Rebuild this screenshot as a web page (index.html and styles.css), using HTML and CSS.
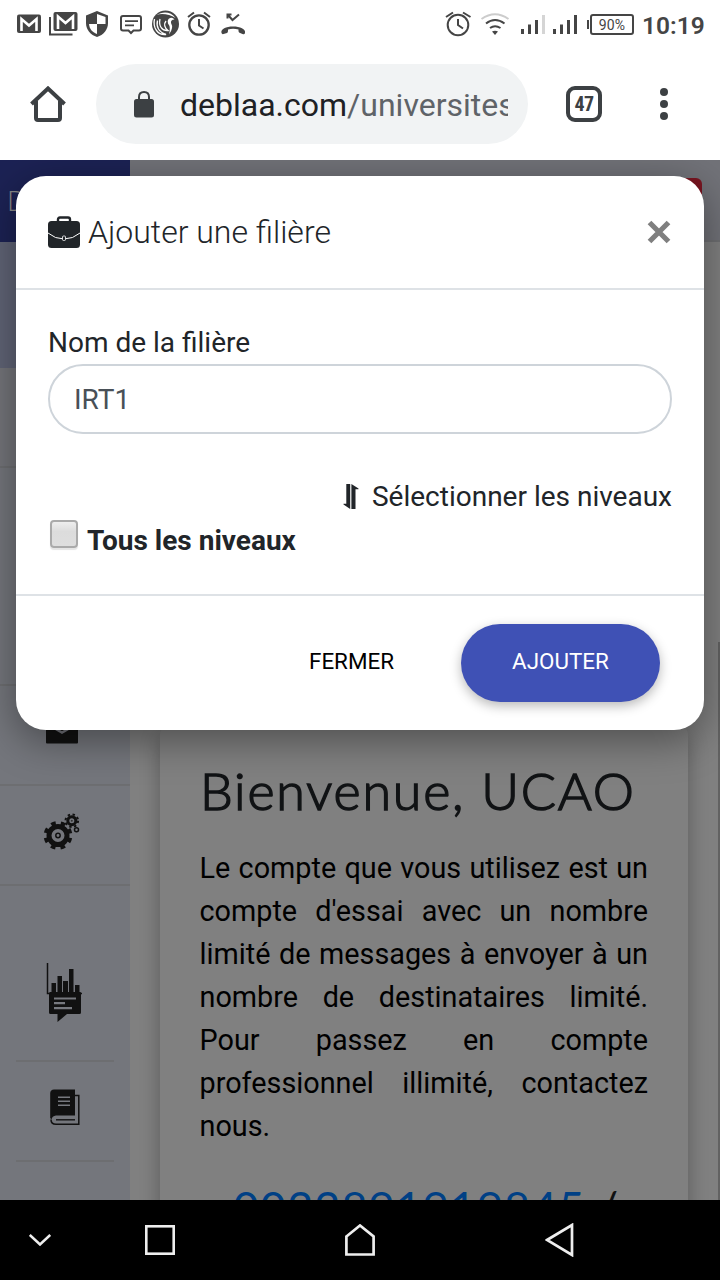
FILE: index.html
```html
<!DOCTYPE html>
<html lang="fr">
<head>
<meta charset="utf-8">
<title>Ajouter une filière</title>
<link rel="stylesheet" href="styles.css">
</head>
<body>
<div class="phone">
  <header class="status">
    <div class="status-icons">
      <svg width="30" height="48" viewBox="15 0 30 48"><rect x="17" y="14.500" width="24" height="18.500" rx="2" fill="#454545"/><path d="M21.500 31V19L29 25.500L36.500 19V31" fill="none" stroke="#fff" stroke-width="2.600"/></svg>
      <svg width="38" height="48" viewBox="45 0 38 48"><rect x="53.500" y="12" width="24" height="19" rx="2" fill="#454545"/><path d="M58 29V16.500L65.500 23L73 16.500V29" fill="none" stroke="#fff" stroke-width="2.600"/><path d="M50 17V34.500H72.500" fill="none" stroke="#454545" stroke-width="2"/></svg>
      <svg width="33" height="48" viewBox="83 0 33 48"><path d="M97 11L108 15.500V23C108 29.500 103.500 35 97 37C90.500 35 86 29.500 86 23V15.500Z" fill="#454545"/><path d="M97 14L105.500 17V24H97Z" fill="#fff"/><path d="M89 24H97V34C92 32 89.500 29 89 24Z" fill="#fff"/></svg>
      <svg width="32" height="48" viewBox="116 0 32 48"><path d="M123 16H139Q141 16 141 18V28.500Q141 30.500 139 30.500H133.500L131 33L128.500 30.500H123Q121 30.500 121 28.500V18Q121 16 123 16Z" fill="none" stroke="#454545" stroke-width="2"/><path d="M125 21.200H138M125 25.400H134" stroke="#454545" stroke-width="1.800"/></svg>
      <svg width="35" height="48" viewBox="148 0 35 48"><circle cx="165.500" cy="24" r="13.500" fill="#454545"/><path d="M156.500 15C163 11 171 11.500 175.500 18C170 14.500 162 13 156.500 15Z" fill="#fff"/><path d="M154.500 19C152.500 28 158 35.500 166 34.500C159 32 156 27 157.500 20.500M160 19C158.500 26 162 31 168 30.500C164.500 28 163.500 24 166 21" fill="none" stroke="#fff" stroke-width="1.300"/><path d="M168.500 19Q172 16.500 174.500 19.500Q170.500 19.500 171 23Q174 28 169 34.500Q171 27 168 23.500Q167 21 168.500 19Z" fill="#fff"/></svg>
      <svg width="33" height="48" viewBox="183 0 33 48"><circle cx="199" cy="25" r="9.700" fill="none" stroke="#454545" stroke-width="2.300"/><path d="M199 19V25.500L203.500 28.500M188 17L194 12.500M204 12.500L210 17" fill="none" stroke="#454545" stroke-width="2"/></svg>
      <svg width="34" height="48" viewBox="216 0 34 48"><path d="M221.500 33C220.500 29 226 26.500 233 26.500S246 29 245 33Q244.500 35 242.500 34L239.500 32.800Q238.500 32.300 238.500 31V29.500Q233 28 228 29.500V31Q228 32.500 227 32.900L223.500 34Q222 34.500 221.500 33Z" fill="#454545"/><path d="M227.500 18.500V14.500H231.500M228 15L232.500 20L239 14.500" fill="none" stroke="#454545" stroke-width="2"/></svg>
    </div>
    <div class="status-icons">
      <svg width="34" height="48" viewBox="442 0 34 48"><circle cx="458" cy="25" r="10.300" fill="none" stroke="#454545" stroke-width="2"/><path d="M458 19V25L463 28.500M446 17L453 12.500M463 12.500L470.500 17" fill="none" stroke="#454545" stroke-width="2"/></svg>
      <svg width="39" height="48" viewBox="476 0 39 48"><path d="M481.500 19Q495 9.500 508.500 19" fill="none" stroke="#ccc" stroke-width="2"/><path d="M486 23.500Q495 16.500 504.500 23.500M490 28Q495 24.500 500.500 28" fill="none" stroke="#454545" stroke-width="2"/><path d="M492 31.500Q495 30 498 31.500L495 35Z" fill="#454545"/></svg>
      <svg width="70" height="48" viewBox="515 0 70 48"><path d="M522.500 29V34M529.500 24.500V34M536.500 20V34M554.500 29V34M561.500 24.500V34M568.500 20V34M575.500 15V34" stroke="#454545" stroke-width="3"/><path d="M543.500 15V34" stroke="#d5d5d5" stroke-width="3"/></svg>
      <div class="battery">90%</div>
      <div class="clock">10:19</div>
    </div>
  </header>

  <nav class="toolbar">
    <svg class="home" width="36" height="36" viewBox="0 0 36 36"><path d="M1.500 18L18 2.500L34.500 18M6 15V32Q6 34 8 34H28Q30 34 30 32V15" fill="none" stroke="#3c4043" stroke-width="4"/></svg>
    <div class="omnibox">
      <svg width="20" height="27" viewBox="0 0 20 27"><rect x="0" y="8" width="20" height="18.500" rx="2.500" fill="#3c4043"/><path d="M5 9V6Q5 1 10 1T15 6V9" fill="none" stroke="#3c4043" stroke-width="2"/></svg>
      <div class="url">deblaa.com<span class="path">/universites</span></div>
    </div>
    <div class="tabs">47</div>
    <svg class="more" width="8" height="32" viewBox="0 0 8 32"><g fill="#3c4043"><circle cx="4" cy="4" r="4"/><circle cx="4" cy="16" r="4"/><circle cx="4" cy="28" r="4"/></g></svg>
  </nav>

  <main class="page">
    <aside class="sidebar">
      <div class="brand">D</div>
      <div class="item active"></div>
      <div class="item first"></div>
      <div class="item tall"></div>
      <div class="item mail"><svg width="36" height="26" viewBox="0 0 36 26"><rect x="2" y="0" width="32" height="25.500" rx="1" fill="#111"/><path d="M4 6.500L18 14.500L32 6.500" fill="none" stroke="#707178" stroke-width="2.500"/></svg></div>
      <div class="item gears"><svg width="38" height="38" viewBox="43 813 38 38">
        <circle cx="58" cy="835.500" r="9" fill="none" stroke="#111" stroke-width="5"/>
        <circle cx="58" cy="835.500" r="12.600" fill="none" stroke="#111" stroke-width="3.600" stroke-dasharray="4.700 5.196" stroke-dashoffset="-2.500"/>
        <circle cx="58" cy="835.500" r="2.200" fill="none" stroke="#111" stroke-width="1.500"/>
        <circle cx="71.800" cy="820.700" r="4" fill="none" stroke="#111" stroke-width="3"/><circle cx="71.800" cy="820.700" r="6.300" fill="none" stroke="#111" stroke-width="2" stroke-dasharray="2.400 2.548"/><circle cx="71.800" cy="820.700" r="1" fill="#333"/>
        <circle cx="76.500" cy="829.700" r="2" fill="none" stroke="#111" stroke-width="1.500"/></svg></div>
      <div class="item report"><svg width="38" height="62" viewBox="45 962 38 62"><path d="M47.500 963V993.500H82" fill="none" stroke="#111" stroke-width="1.500"/><path d="M51.500 983H56V993H51.500ZM57.500 976H62V993H57.500ZM63 981H68V993H63ZM69 969H73.500V993H69ZM75 985H79.500V993H75Z" fill="#111"/><path d="M50 992H80Q81 992 81 993V1012.500Q81 1014 79.500 1014H67L57.500 1022V1014H50.500Q49 1014 49 1012.500V993Z" fill="#111"/><path d="M54 998.500H76M54 1003.200H65M54 1008.200H72" stroke="#77797f" stroke-width="2.200"/></svg></div>
      <div class="item inset"><svg width="30" height="37" viewBox="50 1089 30 37"><path d="M54 1089.500H75V1115.500H56Q52 1116 51.500 1119.500L50.200 1118V1093Q50.500 1089.500 54 1089.500Z" fill="#111"/><path d="M75 1095.500H78.800V1124.300H56Q51 1124.300 51 1119.500" fill="none" stroke="#111" stroke-width="1.500"/><path d="M56 1119.800H75" stroke="#111" stroke-width="1.400"/><path d="M58 1097.200H70M58 1101.200H70M58 1105.200H70" stroke="#77797f" stroke-width="1.500"/></svg></div>
    </aside>
    <div class="content">
      <div class="topbar"></div>
      <section class="card">
        <h1>Bienvenue, UCAO</h1>
        <p>Le compte que vous utilisez est un compte d'essai avec un nombre limité de messages à envoyer à un nombre de destinataires limité. Pour passez en compte professionnel illimité, contactez nous.</p>
        <div class="contact"><a>0022891919845</a> /</div>
      </section>
    </div>
    <div class="badge"></div>
    <div class="scrollbar"></div>

    <div class="modal">
      <div class="modal-header">
        <svg width="32" height="32" viewBox="0 0 32 32"><path d="M10 6V3.500Q10 1.500 12 1.500H20Q22 1.500 22 3.500V6" fill="none" stroke="#212529" stroke-width="2.400"/><rect x="0" y="5" width="32" height="27" rx="3.500" fill="#212529"/><path d="M0 17Q7 23 16 23T32 17" fill="none" stroke="#fff" stroke-width="1"/><rect x="14.500" y="20" width="3" height="4.500" rx="1" fill="#212529" stroke="#fff" stroke-width=".8"/></svg>
        <div class="title">Ajouter une filière</div>
        <svg width="24" height="24" viewBox="0 0 24 24"><path d="M2.500 2.500L21.500 21.500M21.500 2.500L2.500 21.500" stroke="#7f7f7f" stroke-width="5.200"/></svg>
      </div>
      <div class="modal-body">
        <div class="label">Nom de la filière</div>
        <div class="input">IRT1</div>
        <div class="select"><svg width="16" height="26" viewBox="0 0 16 26"><path d="M3.300 0H7.200V25L.5 20.500V19.700H3.300ZM8.400 0L15.500 4.500V5.300H12.500V25H8.400Z" fill="#212529"/></svg><span>Sélectionner les niveaux</span></div>
        <div class="check"><i></i><b>Tous les niveaux</b></div>
      </div>
      <div class="modal-footer">
        <div class="close">FERMER</div>
        <div class="add">AJOUTER</div>
      </div>
    </div>
  </main>

  <footer class="navbar">
    <svg width="22" height="12" viewBox="0 0 22 12"><path d="M.8 1L11 10.500L21.200 1" fill="none" stroke="#eee" stroke-width="2.500"/></svg>
    <svg width="30" height="30" viewBox="0 0 30 30"><rect x="1.300" y="1.300" width="27.400" height="27.400" fill="none" stroke="#eee" stroke-width="2.600"/></svg>
    <svg width="30" height="32" viewBox="0 0 30 32"><path d="M1.400 12.500L15 1.500L28.600 12.500V30.500H1.400Z" fill="none" stroke="#eee" stroke-width="2.700"/></svg>
    <svg class="back" width="29" height="34" viewBox="0 0 29 34"><path d="M2 17L27 2V32Z" fill="none" stroke="#eee" stroke-width="2.700"/></svg>
  </footer>
</div>
</body>
</html>
```

FILE: styles.css
```css
* { box-sizing: border-box; }
body { margin: 0; font-family: Roboto, sans-serif; color: #212529; }
svg { display: block; flex: none; }
.phone { width: 720px; height: 1280px; display: flex; flex-direction: column; overflow: hidden; background: #fff; }

.status { height: 48px; flex: none; display: flex; justify-content: space-between; padding: 0 16px 0 15px; }
.status-icons { display: flex; align-items: center; }
.battery { position: relative; width: 44px; height: 21px; margin: 0 0 0 5px; border: 2px solid #454545; border-radius: 3px; font-size: 14px; line-height: 18px; text-align: center; color: #454545; letter-spacing: .2px; }
.battery::before { content: ""; position: absolute; left: -5px; top: 4px; width: 2px; height: 9px; background: #454545; }
.clock { width: 70px; padding: 2px 0 0 8px; font-size: 24.500px; font-weight: 600; color: #454545; letter-spacing: 0; white-space: nowrap; }

.toolbar { height: 112px; flex: none; display: flex; align-items: center; padding: 0 52px 0 30px; }
.omnibox { width: 432px; height: 80px; margin-left: 30px; border-radius: 40px; background: #f1f3f4; display: flex; align-items: center; padding: 0 20px 0 38px; }
.url { width: 328px; margin-left: 26px; padding-top: 2px; overflow: hidden; white-space: nowrap; font-size: 32px; line-height: 48px; color: #202124; }
.path { color: #5f6368; }
.tabs { width: 36px; height: 36px; margin-left: 38px; border: 4px solid #3c4043; border-radius: 9px; font: 700 20px/28px "Roboto Condensed", Roboto, sans-serif; text-align: center; color: #3c4043; letter-spacing: -.5px; }
.more { margin-left: 58px; }

.page { position: relative; height: 1040px; flex: none; display: flex; overflow: hidden; background: #808080; }
.sidebar { width: 130px; flex: none; background: #74767c; }
.brand { height: 82px; background: #1c2254; padding: 22px 0 0 7px; font: 300 28px/36px "Open Sans", sans-serif; color: #8a8a8a; }
.item { height: 100px; display: flex; align-items: center; justify-content: center; padding-right: 6px; border-bottom: 2px solid #6d6e71; }
.item.active { height: 126px; background: #606476; border: 0; }
.item.tall { height: 218px; }
.item.first { background: #74757a; }
.item.mail { padding-bottom: 8px; }
.item.gears { padding-bottom: 6px; }
.item.report { height: 176px; margin: 0 16px; padding: 42px 2px 0 0; }
.item.report svg { margin-top: -2px; }
.item.inset { margin: 0 16px; padding: 0 1px 7px 0; }
.content { width: 590px; }
.topbar { height: 82px; background: #717278; border-bottom: 2px solid #6e6f72; }
.card { width: 528px; height: 600px; margin: 486px 0 0 30px; padding: 34px 40px; border-radius: 6px; background: #808080; box-shadow: 0 8px 20px rgba(0,0,0,.3); }
h1 { margin: 0; font: 300 52px/56px Lato, sans-serif; color: #111315; white-space: nowrap; letter-spacing: 1.800px; -webkit-text-stroke: 1.500px #111315; }
p { margin: 29px 0 0 -.5px; font-size: 28.800px; line-height: 43px; text-align: justify; color: #000; }
.contact { margin: 31px 0 0 33px; font: 400 45px/56px Lato, sans-serif; white-space: nowrap; color: #111; letter-spacing: 1px; }
.contact a { color: #004085; }
.badge { position: absolute; left: 660px; top: 18px; width: 42px; height: 30px; border-radius: 6px; background: #7b1521; }
.scrollbar { position: absolute; right: 0; top: 482px; width: 2px; height: 558px; background: #626262; }

.modal { position: absolute; left: 16px; top: 16px; width: 688px; height: 554px; border-radius: 30px; background: #fff; box-shadow: 0 10px 40px rgba(0,0,0,.4); }
.modal-header { height: 114px; display: flex; align-items: center; padding: 0 33px 0 32px; border-bottom: 2px solid #dee2e6; }
.title { flex: 1; margin-left: 8px; font-size: 32px; font-weight: 300; white-space: nowrap; }
.modal-body { height: 306px; padding: 32px; border-bottom: 2px solid #dee2e6; font-size: 28px; }
.label { height: 42px; line-height: 42px; white-space: nowrap; }
.input { height: 70px; border: 2px solid #ced4da; border-radius: 35px; padding-left: 24px; line-height: 68px; color: #495057; }
.select { height: 42px; margin-top: 42px; display: flex; justify-content: flex-end; align-items: center; gap: 13px; line-height: 42px; white-space: nowrap; }
.check { height: 42px; margin-top: 2px; display: flex; white-space: nowrap; line-height: 42px; }
.check i { width: 28px; height: 28px; margin: 0 9px 0 2px; border: 2px solid #aaa; border-radius: 4px; background: linear-gradient(#eee, #dcdcdc 40%, #dedede); box-shadow: 0 2px 1px #e5e5e5; }
.modal-footer { display: flex; justify-content: flex-end; align-items: center; height: 134px; padding: 0 44px 0 0; font-size: 22.400px; }
.close { margin-right: 67px; padding-bottom: 4px; color: #000; }
.add { width: 199px; height: 78px; border-radius: 39px; background: #3f51b5; color: #fff; text-align: center; line-height: 75px; box-shadow: 0 4px 12px rgba(0,0,0,.28); }

.navbar { height: 80px; flex: none; display: flex; align-items: center; padding-left: 29px; background: #000; }
.navbar svg:nth-child(2) { margin-left: 94px; }
.navbar svg:nth-child(3) { margin-left: 170px; }
.navbar .back { margin-left: 170px; }
```
